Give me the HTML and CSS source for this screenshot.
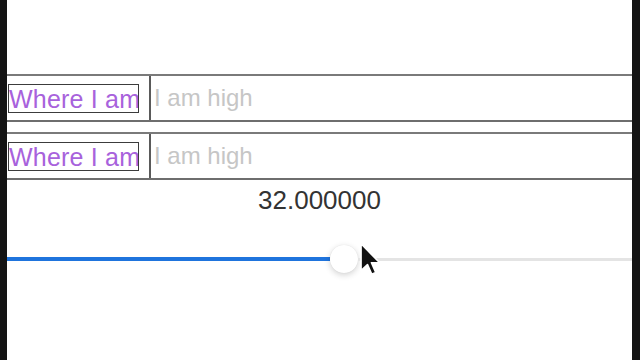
FILE: index.html
```html
<!DOCTYPE html>
<html lang="en">
<head>
  <meta charset="UTF-8">
  <title>Slider demo</title>
  <meta name="viewport" content="width=device-width, initial-scale=1">
  <link rel="stylesheet" href="styles.css">
</head>
<body>
  <div class="screen">
    <div class="row">
      <div class="label-cell"><span class="label">Where I am</span></div>
      <div class="input">I am high</div>
    </div>
    <div class="row">
      <div class="label-cell"><span class="label">Where I am</span></div>
      <div class="input">I am high</div>
    </div>
    <div class="value">32.000000</div>
    <div class="slider">
      <div class="fill"></div>
      <div class="thumb"></div>
      <div class="rest"></div>
    </div>
    <!-- mouse pointer over the thumb -->
    <svg class="cursor" width="22" height="34" viewBox="0 0 12 19">
      <path d="M1 1 L1 16 L4.6 12.6 L7 18 L9.2 17 L6.8 11.6 L11.4 11.6 Z" fill="#111" stroke="#fff" stroke-width="0.9" stroke-linejoin="round"/>
    </svg>
  </div>
</body>
</html>
```

FILE: styles.css
```css
body {
  margin: 0;
  padding: 0;
  background: #141414;
  font-family: 'Liberation Sans', Arial, sans-serif;
  overflow: hidden;
}
.screen {
  position: relative;
  width: 625px;
  height: 360px;
  margin-left: 7px;
  padding-top: 74px;
  box-sizing: border-box;
  background: #fff;
}
.row {
  display: flex;
  height: 48px;
  box-sizing: border-box;
  border-top: 2px solid #7a7a7a;
  border-bottom: 2px solid #6e6e6e;
  margin-bottom: 10px;
}
.label-cell {
  width: 144px;
  box-sizing: border-box;
  border-right: 2px solid #5a5a5a;
  display: flex;
  align-items: center;
  padding-left: 1px;
}
.label {
  display: block;
  width: 131px;
  height: 29px;
  box-sizing: border-box;
  border: 1.5px solid #3c3c3c;
  color: #a862dc;
  font-size: 25px;
  line-height: 28px;
  letter-spacing: 0.2px;
  white-space: nowrap;
  overflow: hidden;
}
.input {
  flex: 1;
  display: flex;
  align-items: center;
  padding-left: 3px;
  font-size: 24px;
  color: #c6c6c6;
}
.value {
  margin-top: -5px;
  height: 30px;
  line-height: 30px;
  text-align: center;
  font-size: 26px;
  color: #333;
}
.slider {
  display: flex;
  align-items: center;
  height: 30px;
  margin-top: 29px;
}
.fill {
  width: 323px;
  height: 4px;
  background: #1f74dd;
}
.thumb {
  width: 28px;
  height: 28px;
  border-radius: 50%;
  background: #fff;
  box-shadow: 0 2px 6px rgba(0,0,0,0.18), 0 0 1px rgba(0,0,0,0.1);
}
.rest {
  flex: 1;
  height: 3px;
  background: #e4e4e4;
}
.cursor {
  position: absolute;
  left: 352px;
  top: 242px;
}
```
